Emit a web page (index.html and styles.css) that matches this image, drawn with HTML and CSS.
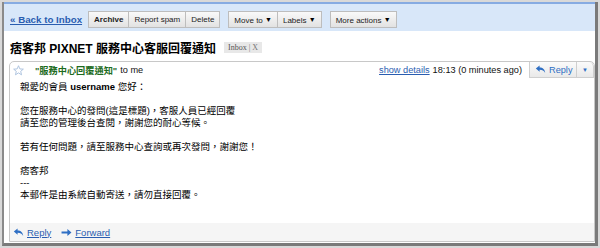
FILE: index.html
```html
<!DOCTYPE html>
<html lang="zh-Hant">
<head>
    <meta charset="UTF-8">
    <title>痞客邦 PIXNET 服務中心客服回覆通知</title>
    <link rel="stylesheet" href="styles.css">
</head>
<body>
    <div class="frame">
        <div class="toolbar">
            <a class="back-link" href="#">&laquo; Back to Inbox</a>
            <div class="btn-group">
                <span class="btn btn-bold">Archive</span>
                <span class="btn">Report spam</span>
                <span class="btn">Delete</span>
            </div>
            <div class="btn-group">
                <span class="btn">Move to <span class="caret">&#9660;</span></span>
                <span class="btn">Labels <span class="caret">&#9660;</span></span>
            </div>
            <div class="btn-group">
                <span class="btn">More actions <span class="caret">&#9660;</span></span>
            </div>
        </div>

        <div class="subject">
            <h1 class="subject-title">痞客邦 PIXNET 服務中心客服回覆通知</h1>
            <span class="label">Inbox <span class="label-x">| X</span></span>
        </div>

        <div class="message">
            <div class="msg-head">
                <svg class="star" width="11" height="11" viewBox="0 0 12 12">
                    <path d="M6 0.8 L7.5 4.3 L11.3 4.5 L8.4 6.9 L9.3 10.7 L6 8.6 L2.7 10.7 L3.6 6.9 L0.7 4.5 L4.5 4.3 Z" fill="none" stroke="#a9bfdd" stroke-width="1"/>
                </svg>
                <span class="sender">"服務中心回覆通知"</span>
                <span class="to">to me</span>
                <span class="spacer"></span>
                <a class="details" href="#">show details</a>
                <span class="time">18:13 (0 minutes ago)</span>
                <div class="reply-group">
                    <span class="reply-btn">
                        <svg width="11" height="9" viewBox="0 0 12 10">
                            <path d="M5 0.5 L0.8 4 L5 7.5 V5.2 C8 5.2 10 6.2 11.2 9 C11 5 8.5 2.8 5 2.8 Z" fill="#2f6fc4"/>
                        </svg>
                        Reply
                    </span>
                    <span class="reply-more">&#9660;</span>
                </div>
            </div>

            <div class="msg-body">
                <p>親愛的會員 <b>username</b> 您好：</p>
                <p>您在服務中心的發問(這是標題)，客服人員已經回覆<br>請至您的管理後台查閱，謝謝您的耐心等候。</p>
                <p>若有任何問題，請至服務中心查詢或再次發問，謝謝您！</p>
                <p>痞客邦<br>---<br>本郵件是由系統自動寄送，請勿直接回覆。</p>
            </div>

            <div class="msg-foot">
                <a class="foot-link" href="#">
                    <svg width="11" height="9" viewBox="0 0 12 10">
                        <path d="M5 0.5 L0.8 4 L5 7.5 V5.2 C8 5.2 10 6.2 11.2 9 C11 5 8.5 2.8 5 2.8 Z" fill="#2f6fc4"/>
                    </svg>
                    <span>Reply</span>
                </a>
                <a class="foot-link" href="#">
                    <svg width="11" height="9" viewBox="0 0 12 10">
                        <path d="M0.5 3.8 H7 V1 L11.5 5 L7 9 V6.2 H0.5 Z" fill="#2f6fc4"/>
                    </svg>
                    <span>Forward</span>
                </a>
            </div>
        </div>
    </div>
</body>
</html>
```

FILE: styles.css
```css
body {
    margin: 0;
    background-color: #d9d9d9;
    font-family: "Liberation Sans", Arial, "Noto Sans CJK TC", sans-serif;
    color: #111;
}

.frame {
    margin: 2px;
    height: 241px;
    border-left: 2px solid #8a8a8a;
    border-right: 3px solid #7a7a7a;
    border-bottom: 3px solid #7a7a7a;
    background-color: #fff;
    display: flex;
    flex-direction: column;
}

/* top bar */
.toolbar {
    height: 29px;
    border-top: 2px solid #86abe2;
    background-color: #d8e7f9;
    display: flex;
    align-items: flex-start;
    padding: 7px 0 0 6px;
    box-sizing: border-box;
}

.back-link {
    font-size: 9.75px;
    font-weight: bold;
    color: #2a5db0;
    line-height: 17px;
    margin-right: 6px;
}

.btn-group {
    display: flex;
    margin-right: 8px;
}

.btn {
    height: 17px;
    line-height: 15px;
    box-sizing: border-box;
    padding: 0 5px;
    border: 1px solid #bdbdbd;
    border-left: none;
    background: linear-gradient(#f9f9f9, #e2e2e2);
    font-size: 8px;
    color: #222;
    white-space: nowrap;
}

.btn:first-child {
    border-left: 1px solid #bdbdbd;
}

.btn-bold {
    font-weight: bold;
}

.caret {
    font-size: 7px;
    color: #000;
    vertical-align: 1px;
}

/* subject */
.subject {
    display: flex;
    align-items: center;
    height: 30px;
    padding: 3px 0 0 6px;
    box-sizing: border-box;
}

.subject-title {
    margin: 0;
    font-size: 12px;
    font-weight: bold;
    color: #000;
}

.label {
    margin-left: 8px;
    padding: 1px 4px;
    background-color: #e8e8e8;
    font-family: "Liberation Serif", "Noto Sans CJK TC", serif;
    font-size: 8px;
    color: #555;
}

.label-x {
    color: #777;
}

/* message card */
.message {
    flex: 1;
    margin: 0 0 1px 5px;
    border: 1px solid #c8c8c8;
    border-top-left-radius: 5px;
    border-top-right-radius: 5px;
    display: flex;
    flex-direction: column;
}

.msg-head {
    display: flex;
    align-items: center;
    height: 16px;
    font-size: 9.2px;
}

.star {
    margin: 0 11px 0 3px;
}

.sender {
    color: #1d6b1d;
    font-weight: bold;
    margin-right: 3px;
}

.spacer {
    flex: 1;
}

.details {
    color: #2a5db0;
    margin-right: 3px;
}

.time {
    margin-right: 7px;
}

.reply-group {
    display: flex;
    align-self: flex-start;
    height: 16px;
}

.reply-btn,
.reply-more {
    display: flex;
    align-items: center;
    box-sizing: border-box;
    height: 16px;
    border: 1px solid #cfcfcf;
    border-top: none;
    background: linear-gradient(#fbfbfb, #e9e9e9);
    color: #2f6fc4;
}

.reply-btn {
    width: 48px;
    gap: 3px;
    padding-left: 5px;
}

.reply-more {
    width: 17px;
    border-left: none;
    justify-content: center;
    font-size: 6px;
    border-top-right-radius: 5px;
}

.msg-body {
    padding: 3px 10px 0;
    flex: 1;
    font-size: 9.5px;
    line-height: 12px;
    color: #000;
}

.msg-body p {
    margin: 0 0 12px;
}

.msg-foot {
    height: 18px;
    background-color: #f5f5f5;
    display: flex;
    align-items: center;
    padding-left: 3px;
    gap: 10px;
}

.foot-link {
    display: flex;
    align-items: center;
    gap: 3px;
    font-size: 9.5px;
    color: #2a5db0;
}
```
